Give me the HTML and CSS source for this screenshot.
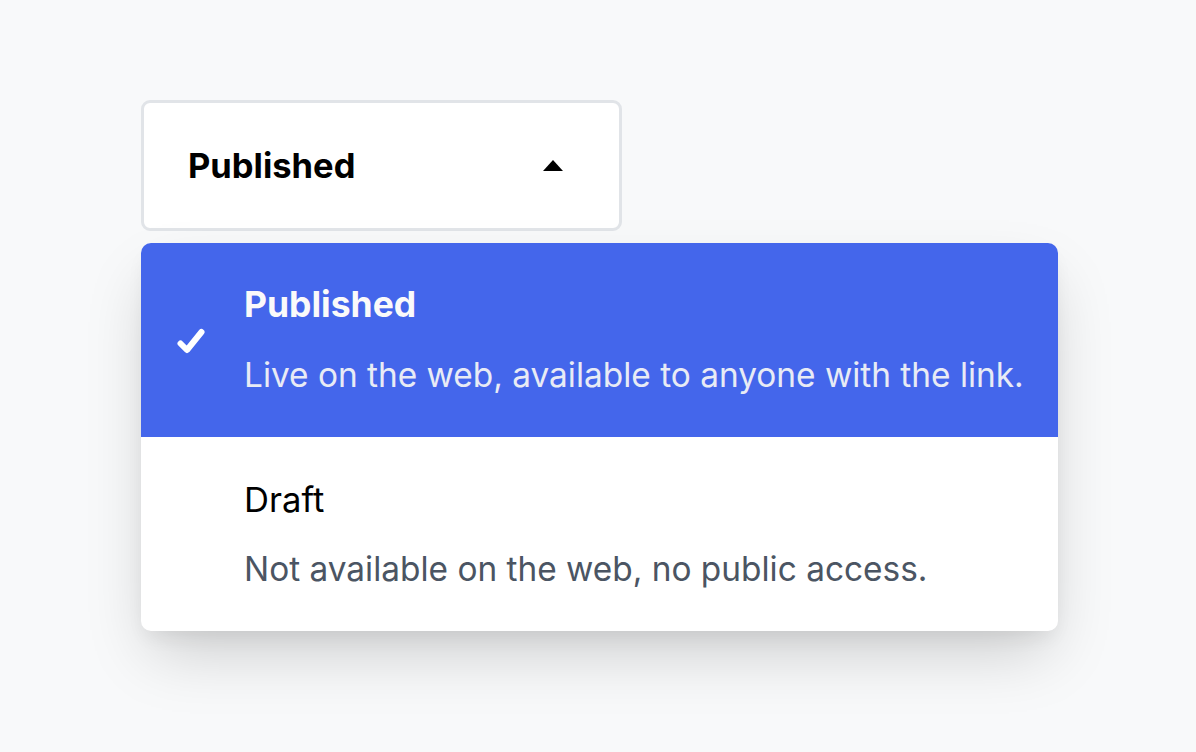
FILE: index.html
```html
<!DOCTYPE html>
<html lang="en">
<head>
<meta charset="utf-8">
<link rel="stylesheet" href="styles.css">
</head>
<body>
<div class="page">
  <button class="select" type="button">
    <span class="select-label">Published</span>
    <span class="caret"></span>
  </button>
  <ul class="menu">
    <li class="option selected">
      <span class="check">
        <svg width="28" height="26" viewBox="0 0 28 26"><path d="M3.5 15.5 L10 22 L24.5 4" fill="none" stroke="#fff" stroke-width="6" stroke-linecap="round" stroke-linejoin="round"/></svg>
      </span>
      <div class="option-text">
        <div class="option-title">Published</div>
        <div class="option-desc">Live on the web, available to anyone with the link.</div>
      </div>
    </li>
    <li class="option">
      <span class="check"></span>
      <div class="option-text">
        <div class="option-title">Draft</div>
        <div class="option-desc">Not available on the web, no public access.</div>
      </div>
    </li>
  </ul>
</div>
</body>
</html>
```

FILE: styles.css
```css
* { box-sizing: border-box; }
html, body { margin: 0; padding: 0; }
body {
  background: #f8f9fa;
  font-family: Inter, "Noto Sans", sans-serif;
  width: 1196px;
  height: 752px;
  overflow: hidden;
}
.page {
  padding: 100px 0 0 141px;
  display: flex;
  flex-direction: column;
  align-items: flex-start;
}
.select {
  width: 481px;
  height: 131px;
  background: #fff;
  border: 3px solid #e1e4e8;
  border-radius: 9px;
  display: flex;
  align-items: center;
  justify-content: space-between;
  padding: 0 56px 0 44px;
  font-family: inherit;
  cursor: pointer;
}
.select-label {
  font-size: 34.5px;
  font-weight: 700;
  color: #000;
}
.caret {
  width: 0;
  height: 0;
  border-left: 10px solid transparent;
  border-right: 10px solid transparent;
  border-bottom: 11px solid #000;
  margin-top: 0;
}
.menu {
  list-style: none;
  margin: 12px 0 0 0;
  padding: 0;
  width: 917px;
  background: #fff;
  border-radius: 10px;
  overflow: hidden;
  box-shadow: 0 30px 60px -10px rgba(0, 0, 0, 0.18), 0 10px 20px -5px rgba(0, 0, 0, 0.07);
}
.option {
  height: 194px;
  display: flex;
  align-items: center;
  padding-left: 36px;
}
.option.selected {
  background: #4466eb;
}
.check {
  width: 67px;
  flex: none;
  display: flex;
  align-items: center;
  padding-top: 2px;
}
.option-text {
  display: flex;
  flex-direction: column;
  gap: 30px;
}
.option-title {
  font-size: 34.6px;
  line-height: 40px;
  color: #000;
}
.selected .option-title {
  font-size: 35.5px;
  font-weight: 700;
  color: #fafafa;
}
.option-desc {
  font-size: 33.4px;
  line-height: 40px;
  color: #4b5563;
}
.selected .option-desc {
  color: #e8ebf5;
}
```
